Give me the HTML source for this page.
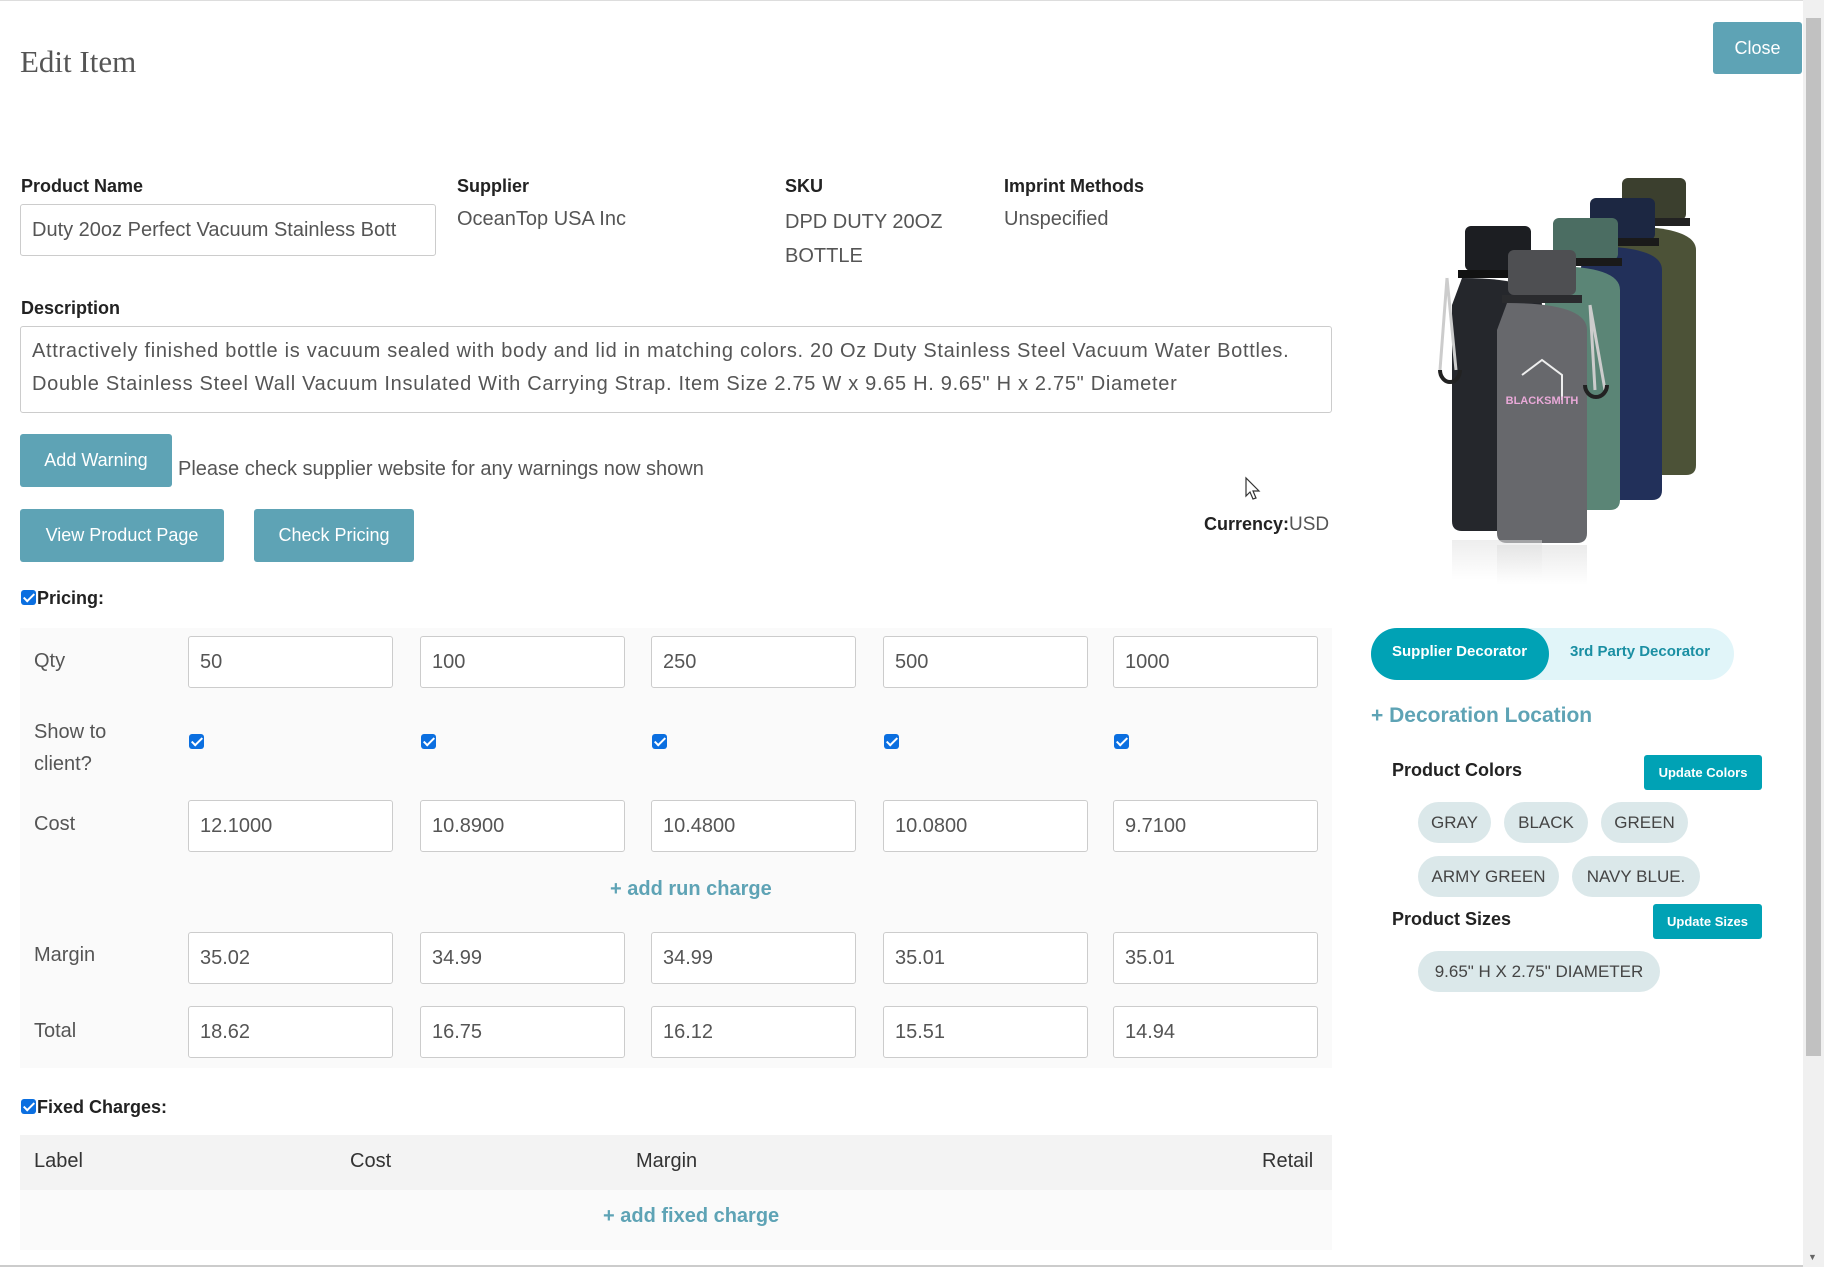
<!DOCTYPE html>
<html><head><meta charset="utf-8">
<style>
*{box-sizing:border-box;margin:0;padding:0}
body{width:1824px;height:1267px;background:#fff;font-family:"Liberation Sans",sans-serif;color:#333;position:relative;overflow:hidden}
.a{position:absolute;white-space:nowrap}
.lbl{font-weight:bold;font-size:18px;color:#222}
.val{font-size:20px;color:#555}
.btn{position:absolute;background:#5ea3b5;color:#fff;font-size:18px;border-radius:3px;display:flex;align-items:center;justify-content:center}
.inp{position:absolute;border:1px solid #ccc;border-radius:3px;background:#fff;font-size:20px;color:#555;padding-left:11px;display:flex;align-items:center;height:52px;width:205px}
.cb{position:absolute;width:15px;height:15px;background:#0b6fe0;border-radius:3px}
.cb:after{content:"";position:absolute;left:5px;top:1px;width:4px;height:9px;border:solid #fff;border-width:0 2px 2px 0;transform:rotate(45deg)}
.chip{position:absolute;background:#dbe8ea;border-radius:21px;font-size:17px;color:#444;display:flex;align-items:center;justify-content:center;height:41px}
.tb{position:absolute;background:#00a2b5;color:#fff;font-weight:bold;font-size:13px;border-radius:3px;display:flex;align-items:center;justify-content:center}
.link{color:#5ea3b5;font-weight:bold;font-size:20px}
</style></head><body>
<div class="a" style="left:0;top:0;width:1803px;height:1px;background:#ddd"></div>
<div class="a" style="left:20px;top:44px;font-family:'Liberation Serif',serif;font-size:31px;color:#555">Edit Item</div>
<div class="btn" style="left:1713px;top:22px;width:89px;height:52px">Close</div>
<div class="a" style="left:1803px;top:0;width:21px;height:1267px;background:#f0f0f0"></div>
<div class="a" style="left:1806px;top:18px;width:15px;height:1038px;background:#c1c1c1"></div>
<div class="a" style="left:1808px;top:1252px;font-size:9px;color:#666">▼</div>

<div class="a lbl" style="left:21px;top:176px">Product Name</div>
<div class="a lbl" style="left:457px;top:176px">Supplier</div>
<div class="a lbl" style="left:785px;top:176px">SKU</div>
<div class="a lbl" style="left:1004px;top:176px">Imprint Methods</div>
<div class="inp" style="left:20px;top:204px;width:416px;overflow:hidden">Duty 20oz Perfect Vacuum Stainless Bott</div>
<div class="a val" style="left:457px;top:208px">OceanTop USA Inc</div>
<div class="a val" style="left:785px;top:205px;line-height:34px">DPD DUTY 20OZ<br>BOTTLE</div>
<div class="a val" style="left:1004px;top:208px">Unspecified</div>

<div class="a lbl" style="left:21px;top:298px">Description</div>
<div class="a" style="left:20px;top:326px;width:1312px;height:87px;border:1px solid #ccc;border-radius:3px;padding:8px 11px;font-size:20px;letter-spacing:0.7px;color:#555;line-height:33px;white-space:nowrap;overflow:hidden">Attractively finished bottle is vacuum sealed with body and lid in matching colors. 20 Oz Duty Stainless Steel Vacuum Water Bottles.<br>Double Stainless Steel Wall Vacuum Insulated With Carrying Strap. Item Size 2.75 W x 9.65 H. 9.65" H x 2.75" Diameter</div>
<div class="btn" style="left:20px;top:434px;width:152px;height:53px">Add Warning</div>
<div class="a val" style="left:178px;top:458px">Please check supplier website for any warnings now shown</div>
<div class="btn" style="left:20px;top:509px;width:204px;height:53px">View Product Page</div>
<div class="btn" style="left:254px;top:509px;width:160px;height:53px">Check Pricing</div>
<div class="a" style="left:1204px;top:514px;font-size:19px;color:#555"><b style="color:#222;font-size:18px">Currency:</b>USD</div>

<div class="cb" style="left:21px;top:590px"></div>
<div class="a lbl" style="left:37px;top:588px">Pricing:</div>
<div class="a" style="left:20px;top:628px;width:1312px;height:440px;background:#fafafa"></div>
<div class="a val" style="left:34px;top:650px">Qty</div>
<div class="a val" style="left:34px;top:716px;line-height:32px">Show to<br>client?</div>
<div class="a val" style="left:34px;top:813px">Cost</div>
<div class="a val" style="left:34px;top:944px">Margin</div>
<div class="a val" style="left:34px;top:1020px">Total</div>
<div class="a link" style="left:610px;top:878px">+ add run charge</div>

<div class="inp" style="left:188px;top:636px">50</div>
<div class="inp" style="left:420px;top:636px">100</div>
<div class="inp" style="left:651px;top:636px">250</div>
<div class="inp" style="left:883px;top:636px">500</div>
<div class="inp" style="left:1113px;top:636px">1000</div>
<div class="cb" style="left:189px;top:734px"></div>
<div class="cb" style="left:421px;top:734px"></div>
<div class="cb" style="left:652px;top:734px"></div>
<div class="cb" style="left:884px;top:734px"></div>
<div class="cb" style="left:1114px;top:734px"></div>
<div class="inp" style="left:188px;top:800px">12.1000</div>
<div class="inp" style="left:420px;top:800px">10.8900</div>
<div class="inp" style="left:651px;top:800px">10.4800</div>
<div class="inp" style="left:883px;top:800px">10.0800</div>
<div class="inp" style="left:1113px;top:800px">9.7100</div>
<div class="inp" style="left:188px;top:932px">35.02</div>
<div class="inp" style="left:420px;top:932px">34.99</div>
<div class="inp" style="left:651px;top:932px">34.99</div>
<div class="inp" style="left:883px;top:932px">35.01</div>
<div class="inp" style="left:1113px;top:932px">35.01</div>
<div class="inp" style="left:188px;top:1006px">18.62</div>
<div class="inp" style="left:420px;top:1006px">16.75</div>
<div class="inp" style="left:651px;top:1006px">16.12</div>
<div class="inp" style="left:883px;top:1006px">15.51</div>
<div class="inp" style="left:1113px;top:1006px">14.94</div>

<div class="cb" style="left:21px;top:1099px"></div>
<div class="a lbl" style="left:37px;top:1097px">Fixed Charges:</div>
<div class="a" style="left:20px;top:1135px;width:1312px;height:55px;background:#f3f3f3"></div>
<div class="a" style="left:20px;top:1190px;width:1312px;height:60px;background:#fafafa"></div>
<div class="a" style="left:34px;top:1150px;font-size:20px;color:#333">Label</div>
<div class="a" style="left:350px;top:1150px;font-size:20px;color:#333">Cost</div>
<div class="a" style="left:636px;top:1150px;font-size:20px;color:#333">Margin</div>
<div class="a" style="left:1262px;top:1150px;font-size:20px;color:#333">Retail</div>
<div class="a link" style="left:603px;top:1205px">+ add fixed charge</div>
<div class="a" style="left:0;top:1265px;width:1803px;height:2px;background:#ccc"></div>

<svg class="a" style="left:1420px;top:170px" width="310" height="420" viewBox="1420 170 310 420">
<defs><linearGradient id="r" x1="0" y1="0" x2="0" y2="1"><stop offset="0" stop-color="#ddd"/><stop offset="1" stop-color="#fff"/></linearGradient></defs>
<g>
<rect x="1622" y="178" width="64" height="42" rx="6" fill="#3b3f2e"/><rect x="1618" y="218" width="72" height="8" fill="#222"/><path d="M1618 226 Q1696 226 1696 250 L1696 465 Q1696 475 1686 475 L1622 475 Q1612 475 1612 465 L1612 250 Z" fill="#4c5237"/>
<rect x="1590" y="198" width="65" height="42" rx="6" fill="#1c2742"/><rect x="1586" y="238" width="73" height="8" fill="#1a1a1a"/><path d="M1588 246 Q1662 246 1662 270 L1662 490 Q1662 500 1652 500 L1590 500 Q1580 500 1580 490 L1580 270 Z" fill="#22305a"/>
<rect x="1553" y="218" width="65" height="42" rx="6" fill="#4b6d62"/><rect x="1549" y="258" width="73" height="8" fill="#1a1a1a"/><path d="M1550 266 Q1620 266 1620 290 L1620 500 Q1620 510 1610 510 L1555 510 Q1545 510 1545 500 L1545 290 Z" fill="#5b8576"/>
<rect x="1465" y="226" width="66" height="45" rx="6" fill="#1c1e22"/><rect x="1458" y="270" width="80" height="8" fill="#111"/><path d="M1462 278 Q1542 278 1542 305 L1542 521 Q1542 531 1532 531 L1462 531 Q1452 531 1452 521 L1452 305 Z" fill="#25272c"/>
<path d="M1447 278 L1440 370 M1447 278 L1456 370" stroke="#ccc" stroke-width="3" fill="none"/><path d="M1440 370 a10 12 0 0 0 20 0" stroke="#222" stroke-width="4" fill="none"/>
<rect x="1508" y="250" width="68" height="45" rx="6" fill="#4e4f52"/><rect x="1502" y="295" width="80" height="8" fill="#2a2b2e"/>
<path d="M1507 303 Q1587 303 1587 330 L1587 533 Q1587 543 1577 543 L1507 543 Q1497 543 1497 533 L1497 330 Z" fill="#67686c"/>
<path d="M1590 305 L1595 390 M1590 305 L1605 390" stroke="#ccc" stroke-width="3" fill="none"/><path d="M1585 385 a11 12 0 0 0 22 0" stroke="#222" stroke-width="4" fill="none"/>
<path d="M1522 375 L1542 360 L1562 375 L1562 400" stroke="#eee" stroke-width="2" fill="none"/>
<text x="1542" y="404" font-family="Liberation Sans" font-weight="bold" font-size="11" fill="#e9a9d8" text-anchor="middle">BLACKSMITH</text>
<rect x="1452" y="540" width="90" height="40" fill="url(#r)" opacity=".5"/><rect x="1497" y="545" width="90" height="40" fill="url(#r)" opacity=".6"/>
</g></svg>

<div class="a" style="left:1371px;top:628px;width:363px;height:52px;border-radius:26px;background:#e1f5f9"></div>
<div class="a" style="left:1371px;top:628px;width:178px;height:52px;border-radius:26px;background:#00a2b5"></div>
<div class="a" style="left:1392px;top:643px;color:#fff;font-weight:bold;font-size:15px">Supplier Decorator</div>
<div class="a" style="left:1570px;top:643px;color:#1a8fa3;font-weight:bold;font-size:15px">3rd Party Decorator</div>
<div class="a" style="left:1371px;top:704px;color:#5ea3b5;font-size:21px;font-weight:bold">+ Decoration Location</div>
<div class="a" style="left:1392px;top:760px;font-size:18px;font-weight:bold;color:#222">Product Colors</div>
<div class="tb" style="left:1644px;top:755px;width:118px;height:35px">Update Colors</div>
<div class="chip" style="left:1418px;top:802px;width:73px">GRAY</div>
<div class="chip" style="left:1504px;top:802px;width:84px">BLACK</div>
<div class="chip" style="left:1601px;top:802px;width:87px">GREEN</div>
<div class="chip" style="left:1418px;top:856px;width:141px">ARMY GREEN</div>
<div class="chip" style="left:1572px;top:856px;width:128px">NAVY BLUE.</div>
<div class="a" style="left:1392px;top:909px;font-size:18px;font-weight:bold;color:#222">Product Sizes</div>
<div class="tb" style="left:1653px;top:904px;width:109px;height:35px">Update Sizes</div>
<div class="chip" style="left:1418px;top:951px;width:242px">9.65" H X 2.75" DIAMETER</div>
<svg class="a" style="left:1244px;top:476px" width="18" height="26"><path d="M2 2 L2 20 L6 16 L9 23 L12 22 L9 15 L15 15 Z" fill="#fff" stroke="#333" stroke-width="1.2"/></svg>
</body></html>
